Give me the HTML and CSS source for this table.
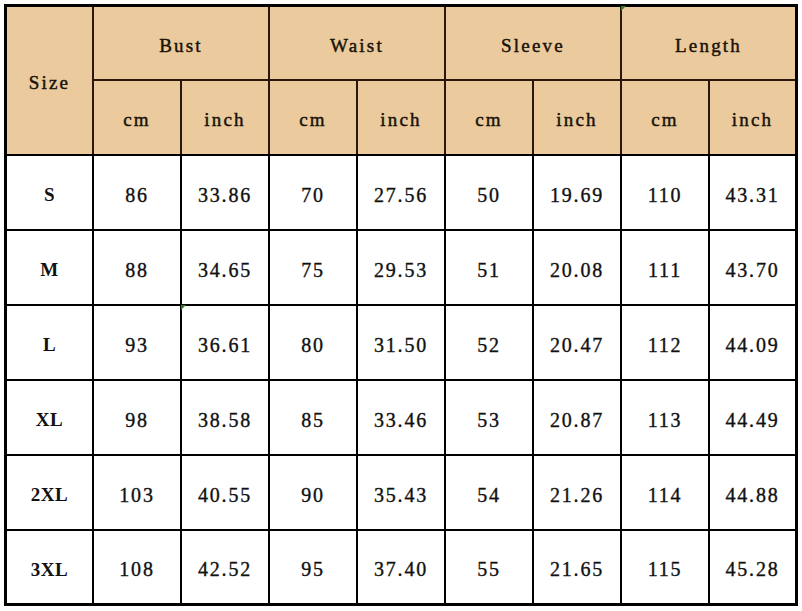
FILE: index.html
```html
<!DOCTYPE html>
<html>
<head>
<meta charset="utf-8">
<link rel="stylesheet" href="styles.css">
</head>
<body>
<div class="frame">
<table class="sizes">
  <colgroup>
    <col class="c-size"><col class="c-val"><col class="c-val"><col class="c-val"><col class="c-val"><col class="c-val"><col class="c-val"><col class="c-val"><col>
  </colgroup>
  <thead>
    <tr class="h1">
      <th rowspan="2">Size</th>
      <th colspan="2">Bust</th>
      <th colspan="2">Waist</th>
      <th colspan="2">Sleeve</th>
      <th colspan="2" class="marked">Length<span class="note"></span></th>
    </tr>
    <tr class="h2">
      <th>cm</th><th>inch</th><th>cm</th><th>inch</th><th>cm</th><th>inch</th><th>cm</th><th>inch</th>
    </tr>
  </thead>
  <tbody>
    <tr><td class="sz">S</td><td>86</td><td>33.86</td><td>70</td><td>27.56</td><td>50</td><td>19.69</td><td>110</td><td>43.31</td></tr>
    <tr><td class="sz">M</td><td>88</td><td>34.65</td><td>75</td><td>29.53</td><td>51</td><td>20.08</td><td>111</td><td>43.70</td></tr>
    <tr><td class="sz">L</td><td>93</td><td class="marked">36.61<span class="note"></span></td><td>80</td><td>31.50</td><td>52</td><td>20.47</td><td>112</td><td>44.09</td></tr>
    <tr><td class="sz">XL</td><td>98</td><td>38.58</td><td>85</td><td>33.46</td><td>53</td><td>20.87</td><td>113</td><td>44.49</td></tr>
    <tr><td class="sz">2XL</td><td>103</td><td>40.55</td><td>90</td><td>35.43</td><td>54</td><td>21.26</td><td>114</td><td>44.88</td></tr>
    <tr class="last"><td class="sz">3XL</td><td>108</td><td>42.52</td><td>95</td><td>37.40</td><td>55</td><td>21.65</td><td>115</td><td>45.28</td></tr>
  </tbody>
</table>
</div>
</body>
</html>
```
FILE: styles.css
```css
html, body {
  margin: 0;
  padding: 0;
  background: #ffffff;
}
body {
  padding: 4px 0 0 4px;
  font-family: "Liberation Serif", "DejaVu Serif", serif;
  color: #111;
}
.frame {
  width: 788px;
  height: 596px;
  border: 3px solid #000;
  background: #fff;
}
.sizes {
  width: 100%;
  height: 100%;
  border-collapse: collapse;
  border-style: hidden;
  table-layout: fixed;
}
.c-size { width: 86px; }
.c-val { width: 88px; }
.sizes th, .sizes td {
  border: 2px solid #000;
  text-align: center;
  vertical-align: middle;
  padding: 5px 0 0 0;
  font-size: 20px;
  letter-spacing: 1.8px;
  position: relative;
  -webkit-text-stroke: 0.35px #111;
}
.sizes th {
  background: #ebcb9e;
  border-color: #2a170b;
  font-weight: normal;
  font-size: 19px;
  letter-spacing: 2.2px;
  color: #1a1208;
  -webkit-text-stroke: 0.45px #1a1208;
}
.sizes thead tr.h2 th { border-bottom-color: #000; }
.sizes thead tr.h1 th:first-child { border-bottom-color: #000; }
.sizes td { font-weight: normal; }
.sizes td.sz {
  font-weight: bold;
  font-size: 19px;
  letter-spacing: 0.5px;
  -webkit-text-stroke: 0;
}
.h1 { height: 73px; }
.h2 { height: 75px; }
.sizes tbody tr { height: 75px; }
.sizes tbody tr.last { height: 73px; }
.note {
  position: absolute;
  left: -1px;
  top: -1px;
  width: 0;
  height: 0;
  border-top: 5px solid #2e7d1e;
  border-right: 5px solid transparent;
}
```
